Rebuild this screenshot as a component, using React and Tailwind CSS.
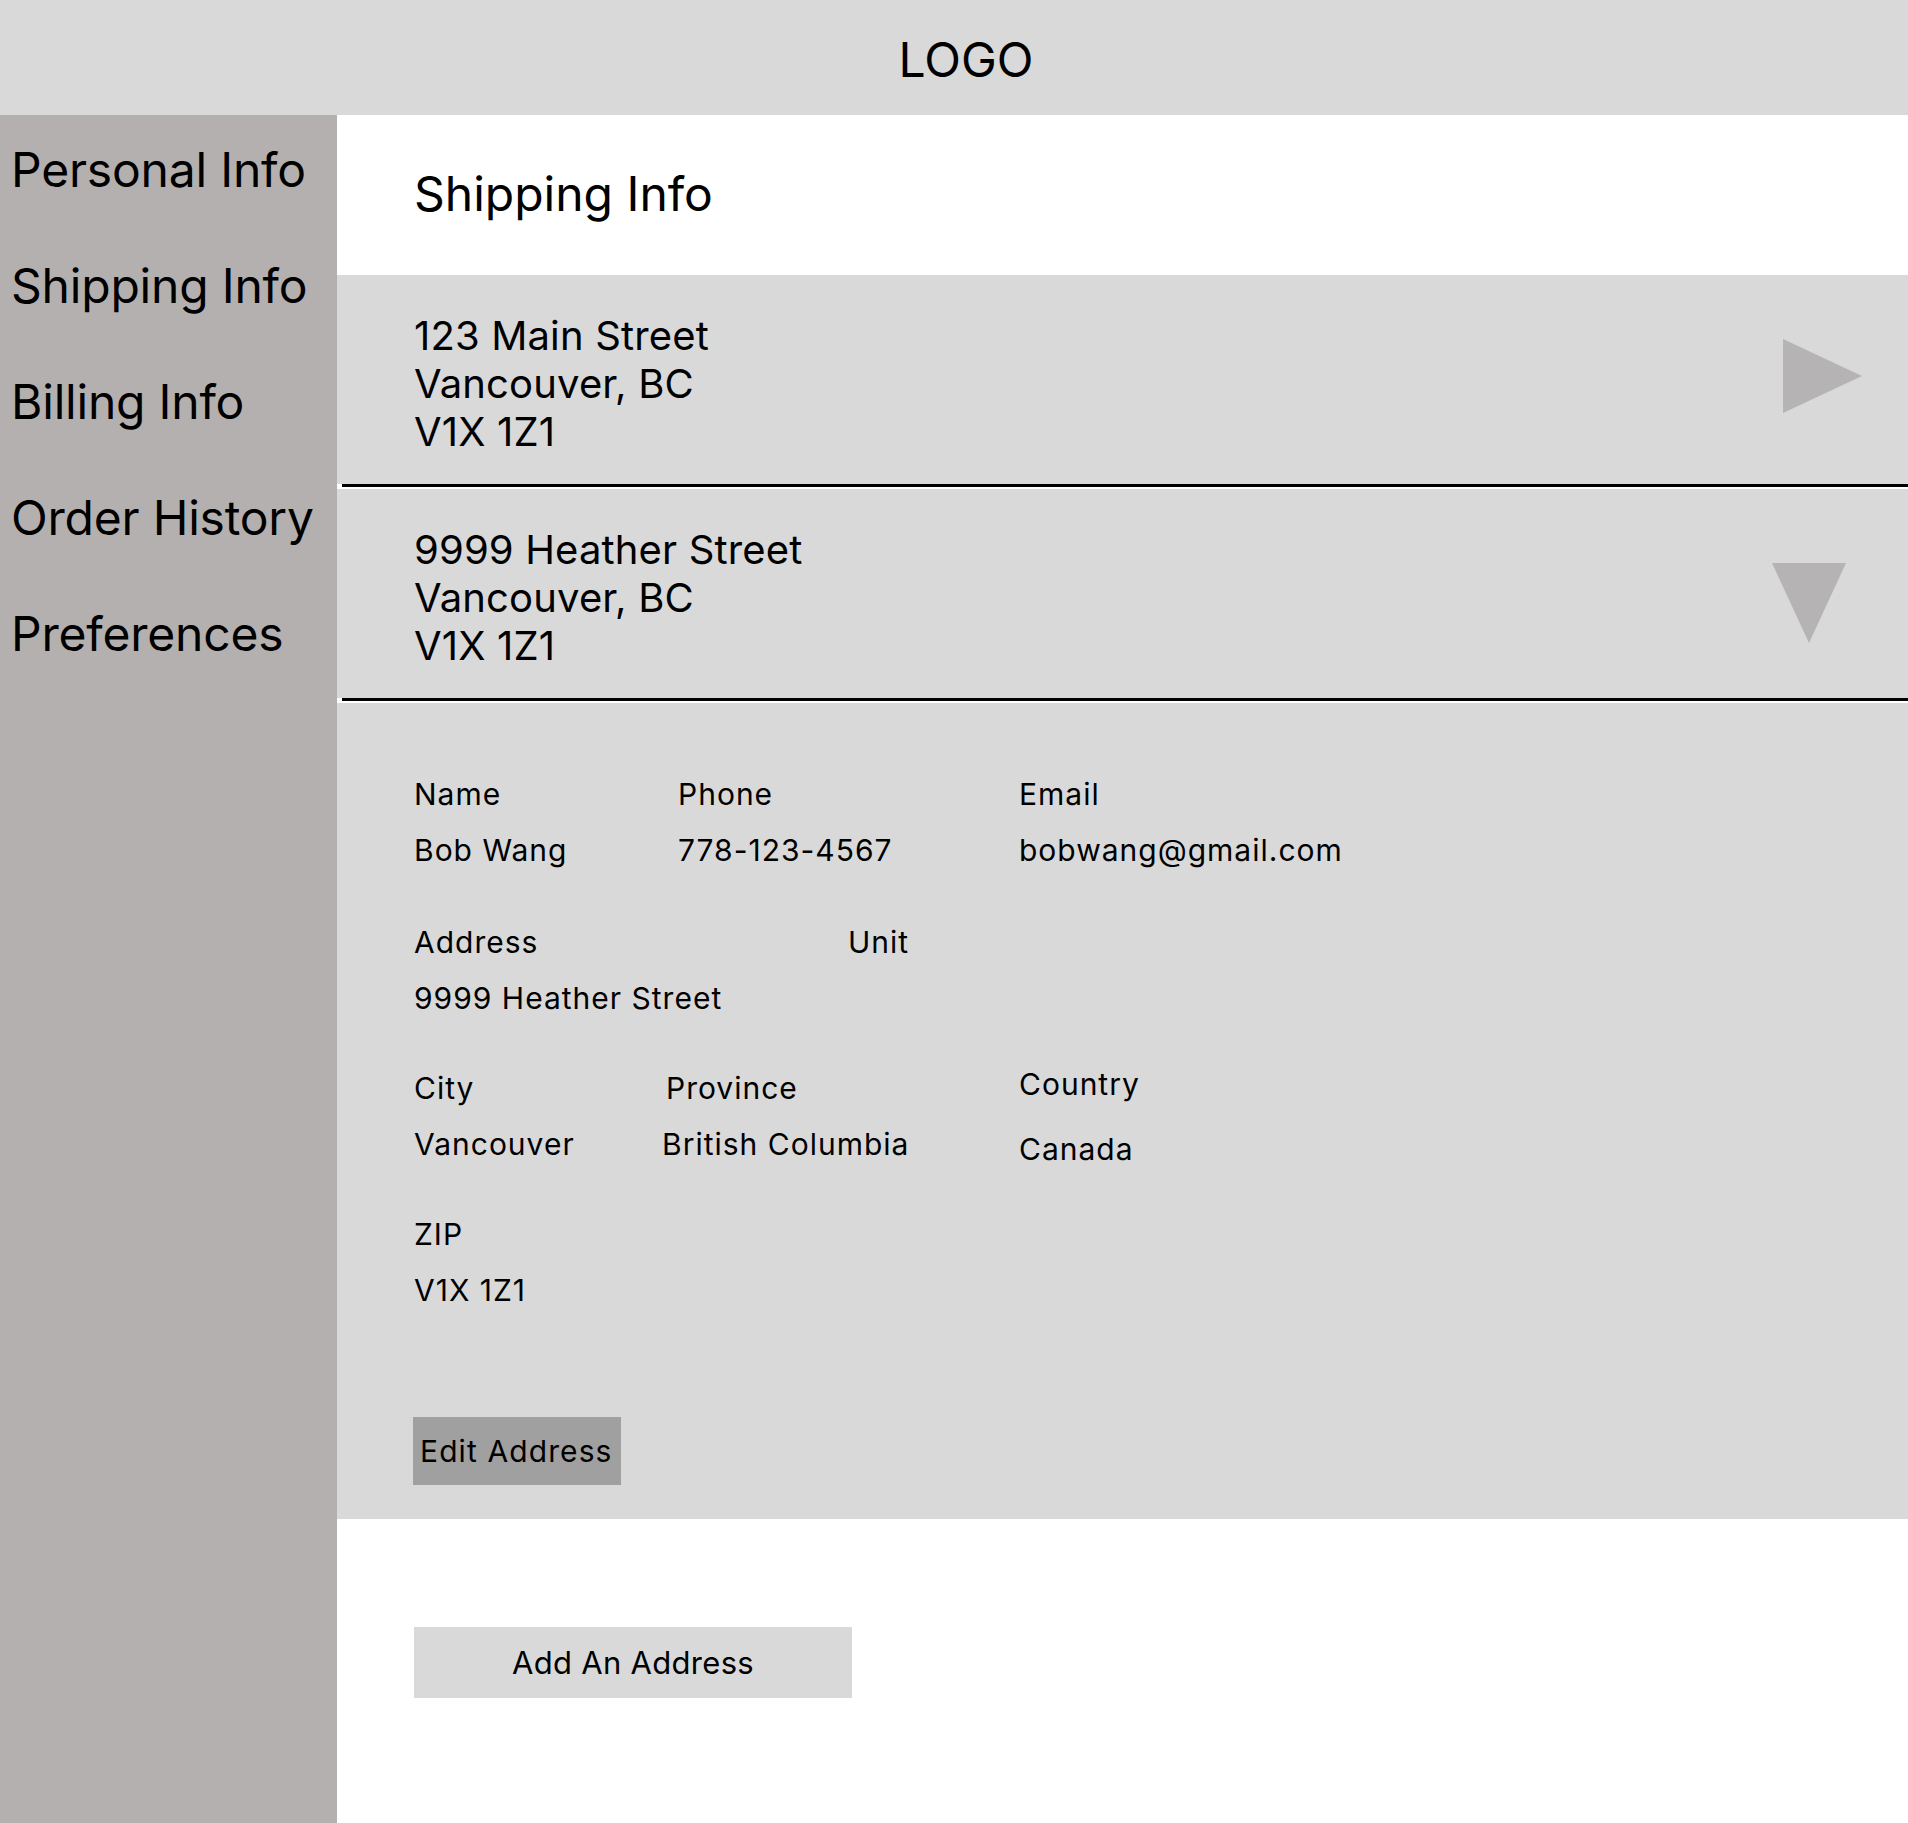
const navItems = ['Personal Info', 'Shipping Info', 'Billing Info', 'Order History', 'Preferences'];

function Field({ label, value, className = '', labelClass = '', valueClass = '' }) {
  return (
    <div className={`flex flex-col gap-[21px] tracking-[1px] ${className}`}>
      <div className={`text-[30px] leading-[35px] ${labelClass}`}>{label}</div>
      <div className={`text-[30px] leading-[35px] h-[35px] ${valueClass}`}>{value}</div>
    </div>
  );
}

function Divider() {
  return (
    <div className="h-[5px] bg-white pl-[5px]">
      <div className="h-[3px] bg-black" />
    </div>
  );
}

function AddressCard({ lines, open }) {
  return (
    <div className={`h-[209px] bg-[#d9d9d9] flex items-center justify-between pl-[77px] ${open ? 'pr-[62px]' : 'pr-[46px]'}`}>
      <div className="text-[40px] leading-[48px] tracking-[0.15px] pt-[9px]">
        {lines.map((l) => (
          <div key={l}>{l}</div>
        ))}
      </div>
      {open ? (
        <svg width="74" height="80" viewBox="0 0 74 80" className="mt-[18px]">
          <polygon points="0,0 74,0 37,80" fill="#b5b3b4" />
        </svg>
      ) : (
        <svg width="79" height="74" viewBox="0 0 79 74" className="mb-[8px]">
          <polygon points="0,0 79,37 0,74" fill="#b5b3b4" />
        </svg>
      )}
    </div>
  );
}

export default function App() {
  return (
    <div className="min-h-[1823px] flex flex-col bg-white text-black font-['Inter',sans-serif]">
      {/* Header */}
      <div className="h-[115px] bg-[#d9d9d9] flex items-center justify-center pl-[24px] shrink-0">
        <span className="text-[48px] leading-none pt-[4px]">LOGO</span>
      </div>

      <div className="flex flex-1">
        {/* Sidebar */}
        <div className="w-[337px] shrink-0 bg-[#b5b0b0] pt-[26px] pl-[11px] flex flex-col gap-[58px]">
          {navItems.map((item) => (
            <div key={item} className="text-[48px] leading-[58px] tracking-[-0.2px] whitespace-nowrap">
              {item}
            </div>
          ))}
        </div>

        {/* Main */}
        <div className="flex-1 flex flex-col">
          <div className="h-[160px] pl-[77px] pt-[50px]">
            <h1 className="text-[48px] leading-[58px]">Shipping Info</h1>
          </div>

          <AddressCard lines={['123 Main Street', 'Vancouver, BC', 'V1X 1Z1']} />
          <Divider />
          <AddressCard open lines={['9999 Heather Street', 'Vancouver, BC', 'V1X 1Z1']} />
          <Divider />

          {/* Expanded details */}
          <div className="bg-[#d9d9d9] pl-[77px] pt-[74px] pb-[34px] flex flex-col">
            <div className="flex flex-col gap-[55px]">
              <div className="flex">
                <Field className="w-[264px]" label="Name" value="Bob Wang" />
                <Field className="w-[341px]" label="Phone" value="778-123-4567" />
                <Field label="Email" value="bobwang@gmail.com" />
              </div>
              <div className="flex mt-[2px]">
                <Field className="w-[434px]" label="Address" value="9999 Heather Street" />
                <Field label="Unit" value="" />
              </div>
              <div className="flex">
                <Field className="w-[252px]" label="City" value="Vancouver" />
                <Field className="w-[353px]" label="Province" value="British Columbia" valueClass="-ml-[4px]" />
                <Field className="-mb-[5px]" label="Country" value="Canada" labelClass="-mt-[4px]" valueClass="mt-[9px]" />
              </div>
              <div className="flex">
                <Field label="ZIP" value="V1X 1Z1" />
              </div>
            </div>

            <button className="mt-[109px] -ml-[1px] w-[208px] h-[68px] bg-[#a0a0a0] flex items-center pl-[7px] text-[30px] leading-none tracking-[1.1px] text-left">
              Edit Address
            </button>
          </div>

          <div className="pl-[77px] pt-[108px] pb-[126px]">
            <button className="w-[438px] h-[71px] bg-[#d9d9d9] flex items-center justify-center text-[31px] leading-none tracking-[0.3px]">
              Add An Address
            </button>
          </div>
        </div>
      </div>
    </div>
  );
}
